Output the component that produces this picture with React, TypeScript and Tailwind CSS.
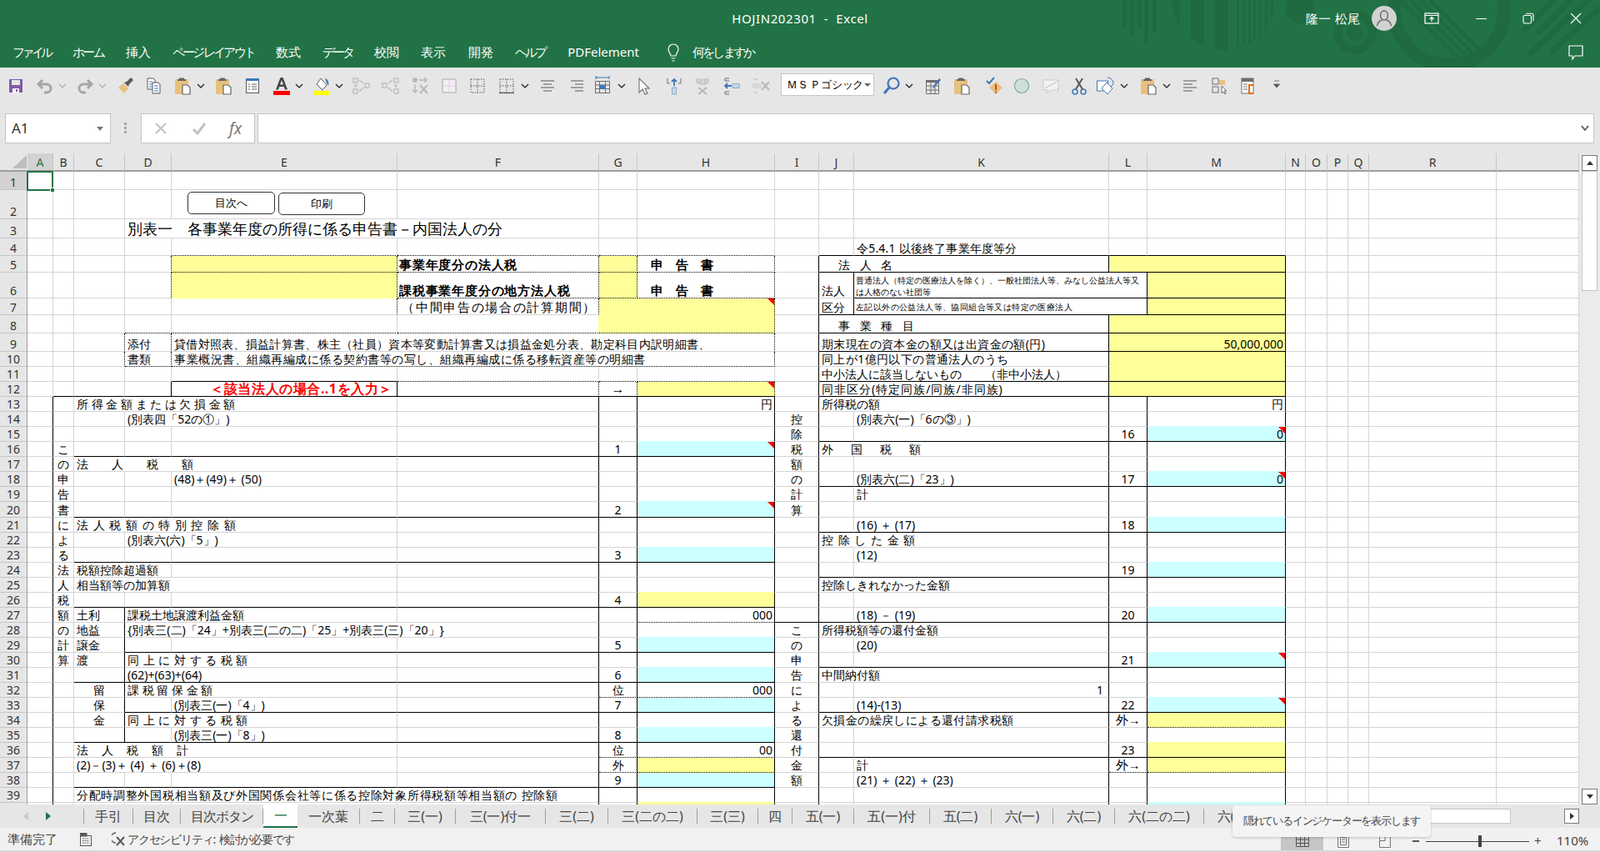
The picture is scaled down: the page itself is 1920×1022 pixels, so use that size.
import React from "react";

const COLS = "ABCDEFGHIJKLMNOPQRS".split("");
const ci = (c: string) => COLS.indexOf(c);
const ROWS = 40;

type L = "k" | "d";
const hl = new Map<string, L>();
const vl = new Map<string, L>();
const H = (r: number, a: string, b: string, s: L) => {
  for (let c = ci(a); c <= ci(b); c++) hl.set(c + ":" + r, s);
};
const V = (c: string, r1: number, r2: number, s: L) => {
  for (let r = r1; r <= r2; r++) vl.set(ci(c) + ":" + r, s);
};

H(4, "E", "H", "d"); H(5, "E", "H", "d"); H(6, "F", "H", "d");
H(8, "D", "H", "d"); H(10, "D", "H", "d"); H(11, "E", "E", "k"); H(11, "F", "H", "d");
H(12, "B", "H", "k"); H(12, "J", "M", "k");
[16, 20, 23, 26, 31, 35, 38].forEach((r) => H(r, "C", "H", "k"));
[29, 33].forEach((r) => H(r, "D", "H", "k"));
H(27, "H", "H", "d"); H(32, "G", "H", "d"); H(36, "G", "H", "d"); H(37, "G", "H", "d");
[4, 5, 7, 8, 9, 11, 15, 18, 21, 24, 30, 33, 36].forEach((r) => H(r, "J", "M", "k"));
H(6, "K", "M", "k"); H(27, "I", "M", "k"); H(34, "M", "M", "d"); H(37, "L", "M", "d");
V("A", 13, 40, "k"); V("C", 9, 10, "d"); V("C", 27, 35, "k"); V("D", 5, 6, "d"); V("D", 9, 10, "d"); V("D", 12, 12, "k");
V("E", 5, 7, "d"); V("E", 12, 12, "k"); V("F", 5, 7, "d"); V("F", 12, 12, "d"); V("F", 13, 40, "k");
V("G", 5, 6, "d"); V("G", 12, 12, "d"); V("G", 13, 40, "k");
V("H", 5, 10, "d"); V("H", 12, 12, "d"); V("H", 13, 40, "k"); V("I", 5, 40, "k");
V("J", 6, 7, "k"); [5, 8, 9, 10, 11, 12].forEach((r) => V("K", r, r, "k")); V("K", 13, 40, "k");
V("L", 6, 7, "k"); V("L", 13, 40, "k"); V("M", 5, 40, "k");

type Fill = "y" | "c";
type Cell = {
  col: string; row: number; text?: string; to?: string; rs?: number; f?: Fill; a?: "l" | "r" | "c"; cls?: string; mark?: boolean;
};
const c = (col: string, row: number, text: string, o: Partial<Cell> = {}): Cell => ({ col, row, text, ...o });
const center = (col: string, first: number, s: string) =>
  s.split("").map((ch, i) => c(col, first + i, ch, { a: "c" }));

const cells: Cell[] = [
  c("D", 3, "別表一　各事業年度の所得に係る申告書－内国法人の分", { to: "F", cls: "text-[18.2px] leading-[22px]" }),
  c("K", 4, "令5.4.1 以後終了事業年度等分", { cls: "tracking-[0.2px]" }),
  c("E", 5, "", { f: "y" }), c("E", 6, "", { f: "y" }),
  c("F", 5, "事業年度分の法人税", { cls: "text-[15px] font-bold tracking-[0.8px] pl-[2px]" }),
  c("F", 6, "課税事業年度分の地方法人税", { cls: "text-[15px] font-bold tracking-[0.8px] pl-[2px]" }),
  c("G", 5, "", { f: "y" }), c("G", 6, "", { f: "y" }),
  c("H", 5, "申　告　書", { cls: "text-[15px] font-bold pl-[16px]" }),
  c("H", 6, "申　告　書", { cls: "text-[15px] font-bold pl-[16px]" }),
  c("F", 7, "（中間申告の場合の計算期間）", { cls: "text-[15px] tracking-[1.7px]", a: "r" }),
  c("G", 7, "", { to: "H", rs: 2, f: "y", mark: true }),
  c("D", 9, "添付"), c("D", 10, "書類"),
  c("E", 9, "貸借対照表、損益計算書、株主（社員）資本等変動計算書又は損益金処分表、勘定科目内訳明細書、", { to: "H", cls: "tracking-[0.3px]" }),
  c("E", 10, "事業概況書、組織再編成に係る契約書等の写し、組織再編成に係る移転資産等の明細書", { to: "H", cls: "tracking-[0.5px]" }),
  c("E", 12, "＜該当法人の場合‥1を入力＞", { a: "r", cls: "text-[16px] tracking-[0.6px] font-bold text-[#ff0000] pr-[5px]" }),
  c("G", 12, "→", { a: "c", cls: "text-[16px]" }), c("H", 12, "", { f: "y", mark: true }),
  c("C", 13, "所 得 金 額 ま た は 欠 損 金 額", { to: "E" }), c("H", 13, "円", { a: "r" }),
  c("D", 14, "(別表四「52の①」)", { to: "E" }),
  c("G", 16, "1", { a: "c" }), c("H", 16, "", { f: "c", mark: true }),
  c("C", 17, "法　　人　　税　　額", { to: "E" }), c("E", 18, "(48)＋(49)＋ (50)"),
  c("G", 20, "2", { a: "c" }), c("H", 20, "", { f: "c", mark: true }),
  c("C", 21, "法 人 税 額 の 特 別 控 除 額", { to: "E", cls: "tracking-[1px]" }), c("D", 22, "(別表六(六)「5」)", { to: "E" }),
  c("G", 23, "3", { a: "c" }), c("H", 23, "", { f: "c" }),
  c("C", 24, "税額控除超過額", { to: "D" }), c("C", 25, "相当額等の加算額", { to: "E" }),
  c("G", 26, "4", { a: "c" }), c("H", 26, "", { f: "y" }),
  c("C", 27, "土利"), c("D", 27, "課税土地譲渡利益金額", { to: "E" }), c("H", 27, "000", { a: "r" }),
  c("C", 28, "地益"), c("D", 28, "{別表三(二)「24」+別表三(二の二)「25」+別表三(三)「20」}", { to: "F" }),
  c("C", 29, "譲金"), c("G", 29, "5", { a: "c" }), c("H", 29, "", { f: "c" }),
  c("C", 30, "渡"), c("D", 30, "同 上 に 対 す る 税 額", { to: "E", cls: "tracking-[0.5px]" }),
  c("D", 31, "(62)+(63)+(64)", { to: "E" }), c("G", 31, "6", { a: "c" }), c("H", 31, "", { f: "c" }),
  c("C", 32, "留", { a: "c" }), c("D", 32, "課 税 留 保 金 額", { to: "E" }), c("G", 32, "位", { a: "c" }), c("H", 32, "000", { a: "r" }),
  c("C", 33, "保", { a: "c" }), c("E", 33, "(別表三(一)「4」)"), c("G", 33, "7", { a: "c" }), c("H", 33, "", { f: "c" }),
  c("C", 34, "金", { a: "c" }), c("D", 34, "同 上 に 対 す る 税 額", { to: "E", cls: "tracking-[0.5px]" }),
  c("E", 35, "(別表三(一)「8」)"), c("G", 35, "8", { a: "c" }), c("H", 35, "", { f: "c" }),
  c("C", 36, "法　人　税　額　計", { to: "E", cls: "tracking-[1px]" }), c("G", 36, "位", { a: "c" }), c("H", 36, "00", { a: "r" }),
  c("C", 37, "(2)－(3)＋ (4) ＋ (6)＋(8)", { to: "E" }), c("G", 37, "外", { a: "c" }), c("H", 37, "", { f: "y" }),
  c("G", 38, "9", { a: "c" }), c("H", 38, "", { f: "c" }),
  c("C", 39, "分配時調整外国税相当額及び外国関係会社等に係る控除対象所得税額等相当額の 控除額", { to: "F", cls: "tracking-[0.7px]" }),
  c("H", 40, "", { f: "y" }),
  ...center("B", 16, "この申告書による法人税額の計算"),
  ...center("I", 14, "控除税額の計算"),
  ...center("I", 28, "この申告による還付金額"),

  c("J", 5, "法 人 名", { to: "K", cls: "pl-[23px] tracking-[4px]" }), c("L", 5, "", { to: "M", f: "y" }),
  c("J", 6, "法人"), c("J", 7, "区分"),
  c("K", 6, "普通法人（特定の医療法人を除く）、一般社団法人等、みなし公益法人等又\nは人格のない社団等", { to: "L", cls: "text-[10px] leading-[14px] pl-[2px]" }),
  c("M", 6, "", { f: "y" }),
  c("K", 7, "左記以外の公益法人等、協同組合等又は特定の医療法人", { to: "L", cls: "text-[10px] tracking-[0.4px] pl-[2px]" }),
  c("M", 7, "", { f: "y" }),
  c("J", 8, "事 業 種 目", { to: "K", cls: "pl-[23px] tracking-[4px]" }), c("L", 8, "", { to: "M", f: "y" }),
  c("J", 9, "期末現在の資本金の額又は出資金の額(円)", { to: "K", cls: "tracking-[0.4px]" }),
  c("L", 9, "50,000,000", { to: "M", f: "y", a: "r" }),
  c("J", 10, "同上が1億円以下の普通法人のうち", { to: "K", cls: "tracking-[0.4px]" }),
  c("L", 10, "", { to: "M", rs: 2, f: "y" }),
  c("J", 11, "中小法人に該当しないもの　　（非中小法人）", { to: "K" }),
  c("J", 12, "同非区分(特定同族/同族/非同族)", { to: "K", cls: "tracking-[1px]" }), c("L", 12, "", { to: "M", f: "y" }),
  c("J", 13, "所得税の額", { to: "K" }), c("M", 13, "円", { a: "r" }),
  c("K", 14, "(別表六(一)「6の③」)"),
  c("L", 15, "16", { a: "c" }), c("M", 15, "0", { f: "c", a: "r", mark: true }),
  c("J", 16, "外　国　税　額", { to: "K", cls: "tracking-[3.5px]" }),
  c("K", 18, "(別表六(二)「23」)"), c("L", 18, "17", { a: "c" }), c("M", 18, "0", { f: "c", a: "r", mark: true }),
  c("K", 19, "計"),
  c("K", 21, "(16) ＋ (17)"), c("L", 21, "18", { a: "c" }), c("M", 21, "", { f: "c" }),
  c("J", 22, "控 除 し た 金 額", { to: "K", cls: "tracking-[1px]" }), c("K", 23, "(12)"),
  c("L", 24, "19", { a: "c" }), c("M", 24, "", { f: "c" }),
  c("J", 25, "控除しきれなかった金額", { to: "K" }),
  c("K", 27, "(18) － (19)"), c("L", 27, "20", { a: "c" }), c("M", 27, "", { f: "c" }),
  c("J", 28, "所得税額等の還付金額", { to: "K" }), c("K", 29, "(20)"),
  c("L", 30, "21", { a: "c" }), c("M", 30, "", { f: "c", mark: true }),
  c("J", 31, "中間納付額", { to: "K" }), c("K", 32, "1", { a: "r", cls: "pr-[6px]" }),
  c("K", 33, "(14)-(13)"), c("L", 33, "22", { a: "c" }), c("M", 33, "", { f: "c", mark: true }),
  c("J", 34, "欠損金の繰戻しによる還付請求税額", { to: "K", cls: "tracking-[0.4px]" }), c("L", 34, "外→", { a: "c", cls: "text-[15px]" }), c("M", 34, "", { f: "y" }),
  c("L", 36, "23", { a: "c" }), c("M", 36, "", { f: "y" }),
  c("K", 37, "計"), c("L", 37, "外→", { a: "c", cls: "text-[15px]" }), c("M", 37, "", { f: "y" }),
  c("K", 38, "(21) ＋ (22) ＋ (23)"),
  c("M", 40, "", { f: "c" }),
];

const fillOf = new Map<string, Fill>();
const covered = new Set<string>();
cells.forEach((x) => {
  const a = ci(x.col), b = x.to ? ci(x.to) : a;
  for (let r = x.row; r < x.row + (x.rs || 1); r++)
    for (let k = a; k <= b; k++) {
      covered.add(k + ":" + r);
      if (x.f) fillOf.set(k + ":" + r, x.f);
    }
});

const rightClass = (col: number, row: number, own?: Fill) => {
  const s = vl.get(col + ":" + row);
  if (s === "k") return "border-r-black";
  if (s === "d") return "border-r-black [border-right-style:dotted]";
  const n = own || fillOf.get(col + 1 + ":" + row);
  if (n === "y") return "border-r-[#ffff99]";
  if (n === "c") return "border-r-[#ccffff]";
  return "border-r-[#d4d4d4]";
};
const bottomClass = (col: number, row: number, own?: Fill) => {
  const s = hl.get(col + ":" + row);
  if (s === "k") return "border-b-black";
  if (s === "d") return "border-b-black [border-bottom-style:dotted]";
  const n = own || fillOf.get(col + ":" + (row + 1));
  if (n === "y") return "border-b-[#ffff99]";
  if (n === "c") return "border-b-[#ccffff]";
  return "border-b-[#d4d4d4]";
};

function SheetCell({ x }: { x: Cell }) {
  const a = ci(x.col), b = x.to ? ci(x.to) : a, rs = x.rs || 1;
  const cls = x.cls || "";
  const justify = x.a === "r" ? "justify-end text-right" : x.a === "c" ? "justify-center text-center" : "justify-start";
  const pad = x.a === "c" ? "" : x.a === "r" ? (cls.includes("pr-[") ? "" : "pr-[2px]") : cls.includes("pl-[") ? "" : "pl-[3px]";
  const size = cls.includes("text-[1") ? "" : "text-[14px]";
  const lead = cls.includes("leading-[") ? "" : "leading-[17px]";
  const color = cls.includes("text-[#") ? "" : "text-black";
  const bg = x.f === "y" ? "bg-[#ffff99]" : x.f === "c" ? "bg-[#ccffff]" : "bg-white";
  return (
    <div
      className={`relative flex items-end overflow-hidden whitespace-pre border-r border-b ${size} ${lead} ${color} ${justify} ${pad} ${bg} ${rightClass(b, x.row, x.f)} ${bottomClass(a, x.row + rs - 1, x.f)} ${cls}`}
      style={{ gridColumn: `${a + 2} / ${b + 3}`, gridRow: `${x.row + 1} / span ${rs}` }}
    >
      <span>{x.text}</span>
      {x.mark && <div className="absolute right-0 top-0 h-[8px] w-[8px] bg-[#ff0000] [clip-path:polygon(0_0,100%_0,100%_100%)]" />}
    </div>
  );
}

function Sheet() {
  const empties: React.ReactNode[] = [];
  for (let r = 1; r <= ROWS; r++)
    for (let k = 0; k < COLS.length; k++) {
      if (covered.has(k + ":" + r)) continue;
      empties.push(
        <div
          key={k + ":" + r}
          className={`border-r border-b bg-white ${rightClass(k, r)} ${bottomClass(k, r)}`}
          style={{ gridColumn: k + 2, gridRow: r + 1 }}
        />
      );
    }
  return (
    <div className="grid h-[781px] w-[1895px] grid-cols-[33px_31px_25px_61px_56px_271px_242px_46px_165px_53px_42px_306px_46px_166px_24px_26px_25px_25px_153px_99px] grid-rows-[22px_22px_35px_23px_21px_20px_31px_20px_22px_22px_18px_18px_18px_18px_18px_18px_18px_18px_18px_18px_19px_18px_18px_18px_18px_18px_18px_18px_18px_18px_18px_18px_18px_18px_18px_18px_18px_18px_18px_18px_18px] overflow-hidden">
      <div className="relative bg-[#e6e6e6] border-b-2 border-b-[#9e9e9e]" style={{ gridColumn: 1, gridRow: 1 }}>
        <div className="absolute bottom-[2px] right-[1px] h-[16px] w-[17px] bg-[#bdbdbd] [clip-path:polygon(100%_0,100%_100%,0_100%)]" />
      </div>
      {COLS.map((l, i) => (
        <div
          key={l}
          className={`flex items-center justify-center border-r border-r-[#c6c6c6] border-b-2 border-b-[#9e9e9e] text-[14px] ${l === "A" ? "bg-[#d2d2d2] text-[#217346]" : "bg-[#e6e6e6] text-[#333333]"}`}
          style={{ gridColumn: i + 2, gridRow: 1 }}
        >
          {l === "S" ? "" : l}
        </div>
      ))}
      {Array.from({ length: ROWS }, (_, i) => (
        <div
          key={i}
          className={`flex items-end justify-center border-b border-b-[#c6c6c6] border-r border-r-[#9e9e9e] text-[14px] leading-[17px] text-[#333333] ${i === 0 ? "bg-[#d2d2d2]" : "bg-[#e6e6e6]"}`}
          style={{ gridColumn: 1, gridRow: i + 2 }}
        >
          {i + 1}
        </div>
      ))}
      {empties}
      {cells.map((x, i) => (
        <SheetCell key={i} x={x} />
      ))}
    </div>
  );
}

const Svg = ({ ml, children, w = 24 }: { ml: string; children: React.ReactNode; w?: number }) => (
  <svg viewBox={`0 0 ${w} 24`} className={`mt-[3px] h-[24px] shrink-0 ${w === 24 ? "w-[24px]" : "w-[10px]"} ${ml}`} fill="none">
    {children}
  </svg>
);
const Chev = ({ ml, off }: { ml: string; off?: boolean }) => (
  <Svg ml={ml} w={10}>
    <path d="M1 10l4 4 4-4" stroke={off ? "#b3b3b3" : "#333333"} strokeWidth="1.5" />
  </Svg>
);
const GR = "#b8b8b8";
const Paste = ({ ml }: { ml: string }) => (
  <Svg ml={ml}>
    <rect x="3" y="4" width="16" height="18" rx="1" fill="#e8c07e" />
    <path d="M8 4V2.5h6V4h2v2H6V4z" fill="#666666" />
    <path d="M12 11h6l3 3v8h-9z" fill="#ffffff" stroke="#666666" strokeWidth="1.2" />
  </Svg>
);
const Boxes = ({ mirror }: { mirror?: boolean }) => (
  <g transform={mirror ? "translate(24 0) scale(-1 1)" : undefined} stroke={GR} strokeWidth="1.2">
    <rect x="3" y="3" width="5" height="5" /><rect x="3" y="16" width="5" height="5" /><rect x="17" y="9" width="5" height="5" />
    <path d="M10 5l5 4M10 19l5-5M4 12h4M6 10v4" />
  </g>
);

function TitleArt() {
  const bars: [number, number, number][] = [
    [1347, 5, 32], [1356, 5, 41], [1365, 5, 32], [1373, 5, 52], [1383, 5, 38],
    [1429, 16, 60], [1458, 16, 66], [1484, 3, 60], [1491, 3, 60], [1498, 3, 60], [1504, 3, 60], [1511, 3, 60], [1518, 3, 60], [1525, 3, 60], [1531, 3, 60],
  ];
  return (
    <svg className="absolute left-0 top-0 h-[81px] w-[1920px]" viewBox="0 0 1920 81" fill="#1f6a41">
      <defs>
        <clipPath id="big"><circle cx="1468" cy="-2" r="62" /></clipPath>
        <clipPath id="inner"><circle cx="1739" cy="12" r="58" /></clipPath>
      </defs>
      {bars.slice(0, 5).map(([x, w, h]) => <rect key={x} x={x} y="0" width={w} height={h} />)}
      <g clipPath="url(#big)">
        <path d="M1405 0h11v30l-11-10z" />
        {bars.slice(5).map(([x, w, h]) => <rect key={x} x={x} y="0" width={w} height={h} />)}
      </g>
      <circle cx="1560" cy="10" r="18" />
      <circle cx="1626" cy="39" r="21" fill="none" stroke="#1f6a41" strokeWidth="10" />
      <circle cx="1626" cy="39" r="10" />
      <circle cx="1739" cy="12" r="66" fill="none" stroke="#1f6a41" strokeWidth="16" />
      <g clipPath="url(#inner)" stroke="#1f6a41" strokeWidth="5">
        <path d="M1680 0l72 72M1692 0l72 72M1704 0l72 72M1716 0l72 72" />
      </g>
      <g stroke="#1f6a41" strokeWidth="7">
        <path d="M1827 38l40-40M1845 40l42-42M1835 66l85-80M1860 64l60-55" />
      </g>
    </svg>
  );
}

const tabs: [string, string][] = [
  ["手引", "w-[59px]"], ["目次", "w-[57px]"], ["目次ボタン", "w-[99px] tracking-[-1px]"], ["一", "w-[41px]"], ["一次葉", "w-[75px]"], ["二", "w-[42px]"],
  ["三(一)", "w-[73px]"], ["三(一)付一", "w-[108px]"], ["三(二)", "w-[75px]"], ["三(二の二)", "w-[107px]"], ["三(三)", "w-[73px]"], ["四", "w-[41px]"],
  ["五(一)", "w-[74px]"], ["五(一)付", "w-[91px]"], ["五(二)", "w-[74px]"], ["六(一)", "w-[74px]"], ["六(二)", "w-[74px]"], ["六(二の二)", "w-[107px]"], ["六(三)", "w-[74px]"],
];
const ribbon: [string, string][] = [
  ["ファイル", "tracking-[-3.6px]"], ["ホーム", "tracking-[-2.300px]"], ["挿入", ""], ["ページレイアウト", "tracking-[-2.700px]"], ["数式", ""], ["データ", "tracking-[-3px]"],
  ["校閲", ""], ["表示", ""], ["開発", "ml-[1px]"], ["ヘルプ", "tracking-[-3px]"], ["PDFelement", "ml-[1px]"],
];

export default function App() {
  return (
    <div className="relative flex h-[1022px] w-[1920px] flex-col overflow-hidden bg-[#e6e6e6] [font-family:'Noto_Sans_CJK_JP','Noto_Sans',sans-serif] [font-feature-settings:'palt']">
      {/* title bar + ribbon tabs */}
      <div className="relative h-[81px] shrink-0 bg-[#217346] text-white">
        <TitleArt />
        <div className="relative grid h-[44px] grid-cols-[1fr_auto_1fr] items-center">
          <div />
          <div className="whitespace-pre text-[15px] tracking-[0.6px]">HOJIN202301  -  Excel</div>
          <div className="flex items-center justify-end">
            <span className="text-[15px] tracking-[0.5px]">隆一 松尾</span>
            <div className="ml-[13px] flex h-[30px] w-[30px] items-center justify-center rounded-full bg-[#d2d2d2]">
              <svg viewBox="0 0 24 24" className="h-[24px] w-[24px]" fill="none" stroke="#666666" strokeWidth="1.3">
                <ellipse cx="12" cy="8.5" rx="4.5" ry="5.5" />
                <path d="M3.5 21c1-5 4-6.5 6-7M20.5 21c-1-5-4-6.5-6-7" />
              </svg>
            </div>
            <svg viewBox="0 0 18 14" className="ml-[33px] h-[14px] w-[18px]" fill="none" stroke="#ffffff" strokeWidth="1.2">
              <rect x="1" y="1" width="16" height="12" /><path d="M1 3.5h16M9 11V5.5M6.5 8L9 5.5 11.500 8" />
            </svg>
            <div className="ml-[44px] h-px w-[13px] bg-white" />
            <svg viewBox="0 0 14 14" className="ml-[43px] h-[14px] w-[14px]" fill="none" stroke="#ffffff" strokeWidth="1.1">
              <rect x="1" y="3.500" width="9.500" height="9.500" rx="1.500" /><path d="M4 1.200h7a2 2 0 0 1 2 2v7" />
            </svg>
            <svg viewBox="0 0 14 14" className="ml-[43px] mr-[22px] h-[14px] w-[14px]" fill="none" stroke="#ffffff" strokeWidth="1.1">
              <path d="M1 1l12 12M13 1L1 13" />
            </svg>
          </div>
        </div>
        <div className="relative flex h-[37px] items-center pl-[15px] text-[15px] leading-none">
          <div className="flex items-center gap-[26px]">
            {ribbon.map(([t, k]) => (
              <span key={t} className={k}>{t}</span>
            ))}
          </div>
          <svg viewBox="0 0 18 24" className="ml-[32px] h-[24px] w-[18px]" fill="none" stroke="#ffffff" strokeWidth="1.2">
            <path d="M6 16c0-3-3-4-3-8a6 6 0 0 1 12 0c0 4-3 5-3 8z" /><path d="M6.500 19h5M7.500 22h3" />
          </svg>
          <span className="ml-[14px] tracking-[-2.8px]">何をしますか</span>
          <svg viewBox="0 0 18 18" className="absolute right-[20px] top-[9px] h-[20px] w-[18px]" fill="none" stroke="#ffffff" strokeWidth="1.200">
            <path d="M1 1h16v12H8l-3 4v-4H1z" />
          </svg>
        </div>
      </div>

      {/* quick access toolbar */}
      <div className="flex h-[55px] shrink-0 items-start pl-[7px] pt-[7px]">
        <Svg ml="">
          <path d="M4 4h16v16H4z" fill="#7f5ba6" /><rect x="7" y="5" width="10" height="6" fill="#e6e6e6" /><rect x="8" y="15" width="8" height="5" fill="#ffffff" /><rect x="12" y="16" width="2" height="3" fill="#7f5ba6" />
        </Svg>
        <Svg ml="ml-[11px]"><path d="M9 5L4 10l5 5" stroke="#a5a5a5" strokeWidth="3" /><path d="M5 10h9a5 5 0 0 1 0 10h-3" stroke="#a5a5a5" strokeWidth="3" /></Svg>
        <Chev ml="ml-[4px]" off />
        <Svg ml="ml-[10px]"><path d="M15 5l5 5-5 5" stroke="#a5a5a5" strokeWidth="3" /><path d="M19 10h-9a5 5 0 0 0 0 10h3" stroke="#a5a5a5" strokeWidth="3" /></Svg>
        <Chev ml="ml-[4px]" off />
        <Svg ml="ml-[10px]"><path d="M4 14l6-5 6 6-5 6z" fill="#e8c07e" /><path d="M11 8l3-1 5-5 3 3-5 5-1 3z" fill="#595959" /></Svg>
        <Svg ml="ml-[10px]">
          <path d="M5 3h7l2 2v11H5z" fill="#ffffff" stroke="#595959" /><path d="M7 7h4M7 10h5M7 13h5" stroke="#3f78b5" />
          <path d="M11 8h7l2 2v11h-9z" fill="#ffffff" stroke="#595959" /><path d="M13 12h5M13 15h5M13 18h5" stroke="#3f78b5" />
        </Svg>
        <Paste ml="ml-[11px]" />
        <Chev ml="ml-[5px]" />
        <Paste ml="ml-[10px]" />
        <Svg ml="ml-[11px]">
          <rect x="4.500" y="3.500" width="15" height="17" fill="#ffffff" stroke="#595959" /><rect x="4" y="3" width="16" height="3" fill="#3f78b5" />
          <path d="M7 10h2M11 10h6M7 13h2M11 13h6M7 16h2M11 16h6" stroke="#595959" />
        </Svg>
        <Svg ml="ml-[11px]">
          <path d="M5 16.500L10.500 2h3L19 16.500h-3l-1.200-3.500h-5.600L8 16.500zM10 10.500h4L12 5z" fill="#444444" fillRule="evenodd" />
          <rect x="2" y="18" width="20" height="5" fill="#ff0000" />
        </Svg>
        <Chev ml="ml-[4px]" />
        <Svg ml="ml-[10px]">
          <path d="M11 3l7 8-5 6-7-7z" fill="#ffffff" stroke="#595959" /><path d="M16 3c4 1 5 5 4 9-1-2-2-3-4-9z" fill="#3f78b5" />
          <rect x="2" y="18" width="20" height="5" fill="#ffff00" />
        </Svg>
        <Chev ml="ml-[4px]" />
        <Svg ml="ml-[9px]"><Boxes /></Svg>
        <Svg ml="ml-[12px]"><Boxes mirror /></Svg>
        <Svg ml="ml-[11px]">
          <circle cx="6" cy="5" r="3" fill={GR} /><path d="M11 5h9M17 2l3 3-3 3M6 10v10M3 17l3 3 3-3" stroke={GR} strokeWidth="1.500" /><path d="M12 11l9 10M21 11l-9 10" stroke={GR} strokeWidth="2" />
        </Svg>
        <Svg ml="ml-[11px]">
          <rect x="4" y="4" width="16" height="16" fill="#f3eef4" stroke="#b3b3b3" strokeWidth="1.200" /><path d="M12 5v14M5 12h14" stroke="#c9b6cf" strokeDasharray="1 1" />
        </Svg>
        <Svg ml="ml-[10px]">
          <path d="M4 4h16v16H4zM12 4v16M4 12h16" stroke="#595959" strokeDasharray="1.500 1.500" />
        </Svg>
        <Svg ml="ml-[11px]">
          <path d="M4 4h16v16H4zM12 4v16M4 12h16" stroke="#595959" strokeDasharray="1.500 1.500" /><path d="M3 20.500h18" stroke="#595959" strokeWidth="1.200" />
        </Svg>
        <Chev ml="ml-[5px]" />
        <Svg ml="ml-[10px]"><path d="M4 6h16M7 10h10M4 14h16M7 18h10" stroke="#595959" strokeWidth="1.200" /></Svg>
        <Svg ml="ml-[11px]"><path d="M5 6h15M10 10h10M5 14h15M10 18h10" stroke="#595959" strokeWidth="1.200" /></Svg>
        <Svg ml="ml-[7px]">
          <path d="M4 2h16M6 2l-2 0M4 0v4M20 0v4" stroke="#3f78b5" /><path d="M3.500 6.500h17v14h-17zM3.500 11h17M3.500 15.500h17M8.500 6.500v14M15.500 6.500v14" stroke="#6e6e6e" /><rect x="9" y="11" width="6" height="5" fill="#3f78b5" />
        </Svg>
        <Chev ml="ml-[6px]" />
        <Svg ml="ml-[10px]"><path d="M6 3v17l4-4 3 6 3-1-3-6h5z" fill="#ffffff" stroke="#6e6e6e" strokeWidth="1.100" /></Svg>
        <Svg ml="ml-[12px]">
          <path d="M4 3v6h3M20 3v6h-3" stroke="#6e6e6e" /><path d="M12 12V4M9 7l3-3 3 3" stroke="#3f78b5" strokeWidth="1.800" /><rect x="9.500" y="14" width="5" height="8" fill="#c6d8ea" stroke="#8fa9c4" />
        </Svg>
        <Svg ml="ml-[10px]">
          <path d="M5 3v5l4 2h6l4-2V3M9 3v6M15 3v6" stroke={GR} fill="#d4d4d4" /><path d="M7 14l10 8M17 14L7 22" stroke={GR} strokeWidth="2.200" />
        </Svg>
        <Svg ml="ml-[11px]">
          <path d="M4 3h5M4 3v3h5M4 19v3h5M4 19h5" stroke="#6e6e6e" /><path d="M12 12H4M7 9l-3 3 3 3" stroke="#3f78b5" strokeWidth="1.800" /><rect x="13" y="9.500" width="8" height="5" fill="#c6d8ea" stroke="#8fa9c4" />
        </Svg>
        <Svg ml="ml-[11px]">
          <path d="M3 4h5M3 20h5" stroke={GR} /><rect x="2" y="9" width="11" height="6" fill="#dcd5dc" /><path d="M13 7l9 10M22 7l-9 10" stroke={GR} strokeWidth="2" />
        </Svg>
        <div className="relative ml-[12px] flex h-[27px] w-[112px] shrink-0 items-center border border-[#c6c6c6] bg-white pl-[6px] text-[13px] text-black">
          <span className="whitespace-pre tracking-[-0.3px]">ＭＳ Ｐゴシック</span>
          <svg viewBox="0 0 8 4" className="absolute right-[3px] h-[4px] w-[8px]"><path d="M0 0h8L4 4z" fill="#666666" /></svg>
        </div>
        <Svg ml="ml-[9px]"><circle cx="14" cy="9" r="6.500" stroke="#3f78b5" strokeWidth="2.200" /><path d="M9 14l-6 7" stroke="#3f78b5" strokeWidth="3" /></Svg>
        <Chev ml="ml-[4px]" />
        <Svg ml="ml-[11px]">
          <path d="M4.500 5.500h15v16h-15zM4.500 12h15M4.500 17h15M10 8v13.500M15 8v13.500" stroke="#6e6e6e" /><rect x="4" y="5" width="16" height="3" fill="#6e6e6e" /><path d="M12 14L20 3l2 2-9 10z" fill="#3f78b5" />
        </Svg>
        <Paste ml="ml-[11px]" />
        <Svg ml="ml-[14px]">
          <path d="M15 7l8 7-8 8-8-8z" fill="#e8c07e" /><path d="M15 10v7M15 18.500v2" stroke="#d9381e" strokeWidth="1.800" /><path d="M4 6l3 3 6-7" stroke="#3f78b5" strokeWidth="2" />
        </Svg>
        <Svg ml="ml-[10px]"><circle cx="12" cy="12" r="8.500" fill="#cfe0d9" stroke="#84aa9d" strokeWidth="1.200" /></Svg>
        <Svg ml="ml-[11px]"><path d="M3 5h18v12H11l-3 4v-4H3z" fill="#f2f2f2" stroke="#b8b8b8" strokeDasharray="2 1" /><path d="M5 15L19 7" stroke="#b8b8b8" /></Svg>
        <Svg ml="ml-[10px]">
          <circle cx="7" cy="19" r="3" stroke="#3f78b5" strokeWidth="1.500" /><circle cx="17" cy="19" r="3" stroke="#3f78b5" strokeWidth="1.500" /><path d="M8 16L16 3M16 16L8 3" stroke="#595959" strokeWidth="2" />
        </Svg>
        <Svg ml="ml-[8px]">
          <rect x="1.500" y="6" width="13" height="12" fill="#ffffff" stroke="#3f78b5" /><path d="M14 2a7 7 0 0 1 7 8l-3 3" stroke="#3f78b5" /><path d="M13 8l7 7-6 7-7-7z" fill="#ffffff" stroke="#3f78b5" />
        </Svg>
        <Chev ml="ml-[5px]" />
        <Paste ml="ml-[12px]" />
        <Chev ml="ml-[5px]" />
        <Svg ml="ml-[11px]"><path d="M4 6h16M4 10h11M4 14h16M4 18h11" stroke="#595959" strokeWidth="1.200" /></Svg>
        <Svg ml="ml-[11px]">
          <rect x="4" y="3" width="7" height="7" stroke="#6e6e6e" /><rect x="4" y="13" width="7" height="7" stroke="#6e6e6e" /><rect x="12" y="5" width="7" height="6" fill="#e8c07e" /><path d="M15 12v9l2-2 2 3 1-1-2-3h3z" fill="#ffffff" stroke="#6e6e6e" />
        </Svg>
        <Svg ml="ml-[11px]">
          <rect x="4" y="3" width="14" height="18" fill="#ffffff" stroke="#6e6e6e" /><rect x="4" y="3" width="14" height="4" fill="#6e6e6e" /><path d="M6 10h5M6 13h5M6 16h5" stroke="#6e6e6e" /><path d="M18 11h-5v10h5" stroke="#e36c0a" strokeWidth="2" />
        </Svg>
        <Svg ml="ml-[17px]" w={10}><path d="M2 6h6M1.500 10h7L5 14z" fill="#595959" stroke="#595959" strokeWidth=".8" /></Svg>
      </div>

      {/* formula bar */}
      <div className="flex h-[48px] shrink-0 items-start pl-[6px]">
        <div className="flex h-[36px] w-[127px] items-center justify-between border border-[#c6c6c6] bg-white pl-[7px] pr-[8px] text-[17px] text-[#333333]">
          <span>A1</span>
          <svg viewBox="0 0 8 5" className="h-[5px] w-[8px]"><path d="M0 0h8L4 5z" fill="#777777" /></svg>
        </div>
        <div className="ml-[16px] mt-[11px] flex flex-col gap-[2px]">
          <div className="h-[3px] w-[3px] bg-[#a8a8a8]" /><div className="h-[3px] w-[3px] bg-[#a8a8a8]" /><div className="h-[3px] w-[3px] bg-[#a8a8a8]" />
        </div>
        <div className="ml-[17px] flex h-[36px] w-[137px] items-center border border-[#c6c6c6] bg-white">
          <svg viewBox="0 0 16 16" className="ml-[15px] h-[16px] w-[16px]" fill="none" stroke="#c2c2c2" strokeWidth="2"><path d="M2 2l12 12M14 2L2 14" /></svg>
          <svg viewBox="0 0 18 16" className="ml-[29px] h-[16px] w-[18px]" fill="none" stroke="#c2c2c2" strokeWidth="3"><path d="M2 9l5 5L16 2" /></svg>
          <span className="ml-[27px] [font-family:'Liberation_Serif',serif] text-[19px] italic text-[#777777]">fx</span>
        </div>
        <div className="ml-[3px] flex h-[36px] w-[1604px] items-center justify-end border border-[#c6c6c6] bg-white pr-[5px]">
          <svg viewBox="0 0 10 8" className="h-[8px] w-[10px]" fill="none" stroke="#666666" strokeWidth="2"><path d="M1 1l4 5 4-5" /></svg>
        </div>
      </div>

      {/* sheet */}
      <div className="relative flex h-[781px] shrink-0">
        <Sheet />
        <div className="absolute left-[225px] top-[46px] flex h-[27px] w-[105px] items-center justify-center rounded-[5px] border border-[#333333] bg-white text-[13px] text-black">目次へ</div>
        <div className="absolute left-[334px] top-[47px] flex h-[27px] w-[104px] items-center justify-center rounded-[5px] border border-[#333333] bg-white text-[13px] text-black">印刷</div>
        <div className="absolute left-[32px] top-[21px] h-[24px] w-[32px] border-2 border-[#217346]">
          <div className="absolute bottom-[-4px] right-[-4px] h-[6px] w-[6px] border border-white bg-[#217346]" />
        </div>
        <div className="relative flex w-[25px] flex-col items-center bg-[#ebebeb] pt-[2px]">
          <div className="flex h-[19px] w-[19px] items-center justify-center border border-[#7a7a7a] bg-white">
            <svg viewBox="0 0 8 5" className="h-[5px] w-[8px]"><path d="M4 0l4 5H0z" fill="#333333" /></svg>
          </div>
          <div className="h-[144px] w-[19px] border border-[#c6c6c6] bg-white" />
          <div className="absolute bottom-0 flex h-[19px] w-[19px] items-center justify-center border border-[#7a7a7a] bg-white">
            <svg viewBox="0 0 8 5" className="h-[5px] w-[8px]"><path d="M4 5l4-5H0z" fill="#333333" /></svg>
          </div>
        </div>
      </div>

      {/* sheet tabs */}
      <div className="flex h-[28px] shrink-0 items-start bg-[#e6e6e6] text-[16px] leading-none text-[#444444]">
        <div className="flex h-[28px] w-[100px] items-center pl-[28px]">
          <svg viewBox="0 0 6 10" className="h-[10px] w-[6px]"><path d="M6 0v10L0 5z" fill="#c8c8c8" /></svg>
          <svg viewBox="0 0 6 10" className="ml-[21px] h-[10px] w-[6px]"><path d="M0 0v10l6-5z" fill="#217346" /></svg>
        </div>
        <div className="flex h-[28px] w-[1400px] items-center overflow-hidden">
          <div className="h-[18px] w-px shrink-0 bg-[#9e9e9e]" />
          {tabs.map(([t, w]) =>
            t === "一" ? (
              <div key={t} className={`flex h-[28px] shrink-0 items-center justify-center border-b-2 border-b-[#217346] bg-white text-[#217346] ${w}`}>{t}</div>
            ) : (
              <div key={t} className={`flex h-[18px] shrink-0 items-center justify-center border-r border-r-[#9e9e9e] whitespace-nowrap ${w}`}>{t}</div>
            )
          )}
        </div>
        <div className="mt-[5px] h-[18px] w-[313px] border border-[#c6c6c6] bg-white" />
        <div className="ml-[64px] mt-[5px] flex h-[18px] w-[18px] items-center justify-center border border-[#7a7a7a] bg-white">
          <svg viewBox="0 0 5 8" className="h-[8px] w-[5px]"><path d="M0 0l5 4-5 4z" fill="#333333" /></svg>
        </div>
      </div>

      {/* status bar */}
      <div className="flex h-[29px] shrink-0 items-center border-b-2 border-b-[#d5d7de] bg-[#f1f1f1] pl-[9px] text-[15px] text-[#444444]">
        <span>準備完了</span>
        <svg viewBox="0 0 14 16" className="ml-[27px] h-[16px] w-[14px]" fill="none" stroke="#595959"><rect x=".5" y="3.500" width="13" height="12" /><rect x="0" y="0" width="8" height="4" fill="#595959" /><path d="M3 7h8M3 9.500h8M3 12h8" strokeDasharray="1.500 1" /></svg>
        <svg viewBox="0 0 16 18" className="ml-[24px] h-[18px] w-[16px]" fill="none" stroke="#595959" strokeWidth="1.300"><path d="M5 1a6 6 0 0 0 0 12" /><path d="M6 6l9 10M15 6L6 16" strokeWidth="2" /></svg>
        <span className="ml-[3px] whitespace-pre text-[14px] tracking-[-1.200px]">アクセシビリティ:  検討が必要です</span>
        <div className="absolute bottom-[2px] left-[1537px] flex h-[27px] w-[51px] items-end justify-center bg-[#c6c6c6] pb-[4px]">
          <svg viewBox="0 0 16 14" className="h-[14px] w-[16px]" fill="none" stroke="#555555"><path d="M.5.5h15v13H.5zM.5 5h15M.5 9.500h15M5.500.5v13M10.500.5v13" /></svg>
        </div>
        <svg viewBox="0 0 14 16" className="absolute bottom-[5px] left-[1605px] h-[16px] w-[14px]" fill="none" stroke="#777777"><path d="M.5.5h13v15H.5zM3.500 3.500h7v9h-7zM5 6h4M5 9h4" /></svg>
        <svg viewBox="0 0 14 16" className="absolute bottom-[5px] left-[1655px] h-[16px] w-[14px]" fill="none" stroke="#777777"><path d="M.5.5h13v15H.5zM7 .5v7h-6.500" /></svg>
        <div className="absolute bottom-[12px] left-[1695px] h-[2px] w-[8px] bg-[#555555]" />
        <div className="absolute bottom-[12px] left-[1711px] h-px w-[124px] bg-[#444444]" />
        <div className="absolute bottom-[6px] left-[1774px] h-[14px] w-[4px] bg-[#444444]" />
        <span className="absolute bottom-[3px] left-[1841px] text-[15px]">+</span>
        <span className="absolute bottom-[3px] left-[1868px] text-[15px]">110%</span>
      </div>

      {/* tooltip */}
      <div className="absolute left-[1479px] top-[966px] flex h-[38px] w-[238px] items-center justify-center rounded-[4px] bg-[#f4f4f4] text-[13px] tracking-[-1.200px] text-[#444444] shadow-[0_1px_3px_rgba(0,0,0,0.2)]">
        隠れているインジケーターを表示します
      </div>
    </div>
  );
}
